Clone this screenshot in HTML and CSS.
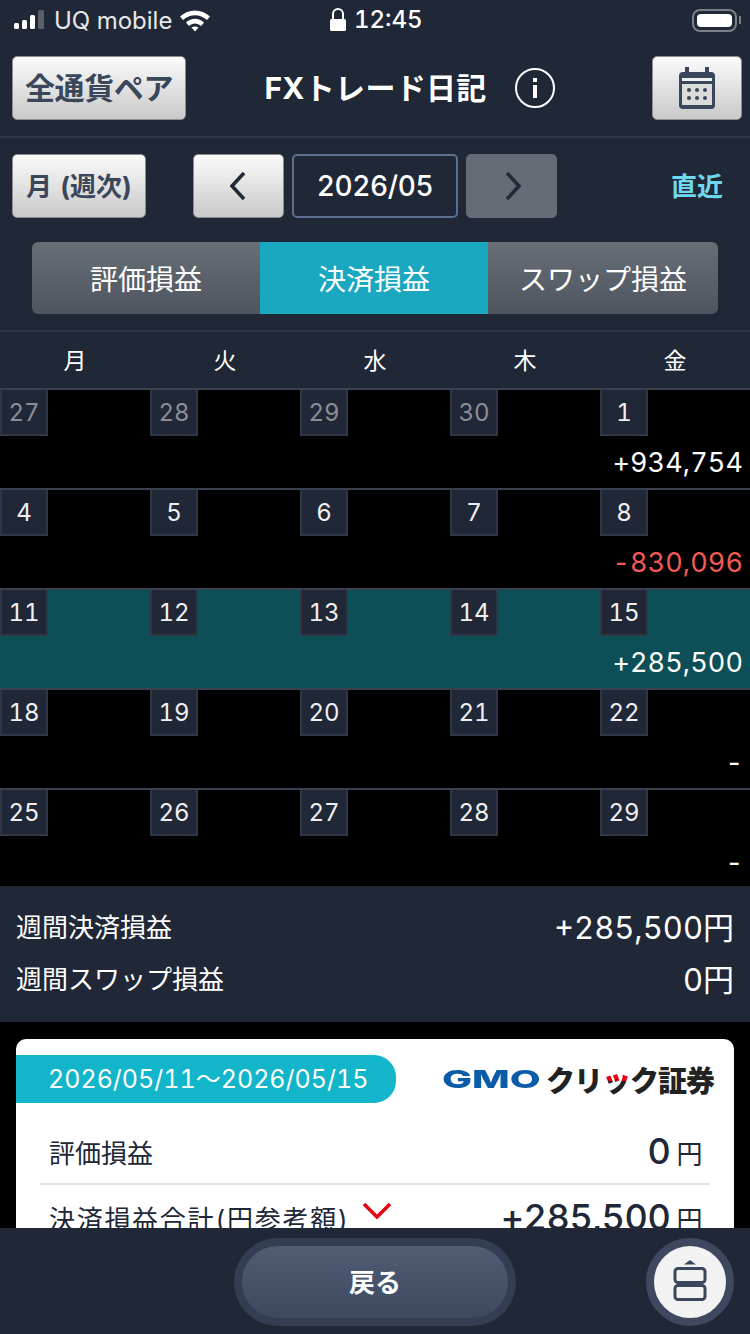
FILE: index.html
```html
<!DOCTYPE html>
<html lang="ja">
<head>
    <meta charset="UTF-8">
    <meta name="viewport" content="width=device-width, initial-scale=1.0">
    <title>FXトレード日記</title>
    <link rel="stylesheet" href="styles.css">
</head>
<body>
<div class="screen">
    <!-- status bar -->
    <div class="status-bar">
        <div class="status-left">
            <svg class="signal" width="34" height="22" viewBox="0 0 34 22">
                <rect x="1" y="14" width="5" height="6" rx="1.5" fill="#fff"/>
                <rect x="9" y="11" width="5" height="9" rx="1.5" fill="#fff"/>
                <rect x="17" y="6" width="5" height="14" rx="1.5" fill="#fff"/>
                <rect x="25" y="1" width="6" height="19" rx="1.5" fill="#5b6068"/>
            </svg>
            <span>UQ mobile</span>
            <svg class="wifi" width="32" height="24" viewBox="0 0 32 24">
                <path d="M1 8.5C9.500 .5 22.500 .5 31 8.500L28 12C21 5.500 11 5.500 4 12Z" fill="#fff"/>
                <path d="M7 14.500C12.500 9.500 19.500 9.500 25 14.500L22 18C18.500 14.500 13.500 14.500 10 18Z" fill="#fff"/>
                <path d="M12.500 19.500C14.500 18 17.500 18 19.500 19.500L16 23.500Z" fill="#fff"/>
            </svg>
        </div>
        <div class="status-center">
            <svg width="18" height="26" viewBox="0 0 18 26">
                <path d="M4 12V7a5 5 0 0 1 10 0v5" fill="none" stroke="#fff" stroke-width="2"/>
                <rect x="1" y="12" width="16" height="12" rx="1.500" fill="#fff"/>
            </svg>
            <span>12:45</span>
        </div>
        <div class="status-right">
            <div class="battery"><div class="battery-level"></div></div>
            <div class="battery-tip"></div>
        </div>
    </div>

    <!-- title -->
    <div class="header">
        <button class="btn btn-pair">全通貨ペア</button>
        <div class="title">
            <span class="title-text">FXトレード日記</span>
            <svg width="40" height="40" viewBox="0 0 40 40">
                <circle cx="20" cy="20" r="19" fill="none" stroke="#fff" stroke-width="2"/>
                <rect x="18" y="10" width="4" height="4" fill="#fff"/>
                <rect x="18" y="17" width="4" height="13" fill="#fff"/>
            </svg>
        </div>
        <button class="btn btn-cal">
            <svg width="36" height="42" viewBox="0 0 36 42">
                <rect x="0" y="5" width="36" height="37" rx="4" fill="#3a465a"/>
                <rect x="6" y="0" width="4" height="8" fill="#3a465a"/>
                <rect x="26" y="0" width="4" height="8" fill="#3a465a"/>
                <rect x="3" y="11" width="30" height="3" fill="#f1f1f1"/>
                <rect x="3" y="17" width="30" height="21" fill="#dcdcdc"/>
                <g fill="#3a465a">
                    <circle cx="10" cy="23" r="2"/><circle cx="18" cy="23" r="2"/><circle cx="26" cy="23" r="2"/>
                    <circle cx="10" cy="31" r="2"/><circle cx="18" cy="31" r="2"/><circle cx="26" cy="31" r="2"/>
                </g>
            </svg>
        </button>
    </div>

    <!-- month nav -->
    <div class="nav-row">
        <button class="btn btn-mode">月 (週次)</button>
        <button class="btn btn-arrow">
            <svg width="18" height="30" viewBox="0 0 18 30"><path d="M14 2L2 15l12 13" fill="none" stroke="#222a38" stroke-width="3.500"/></svg>
        </button>
        <div class="date-box">2026/05</div>
        <button class="btn btn-arrow btn-disabled">
            <svg width="18" height="30" viewBox="0 0 18 30"><path d="M4 2l12 13L4 28" fill="none" stroke="#222a38" stroke-width="3.500"/></svg>
        </button>
        <a class="latest">直近</a>
    </div>

    <div class="tabs">
        <div class="tab">評価損益</div>
        <div class="tab tab-active">決済損益</div>
        <div class="tab">スワップ損益</div>
    </div>

    <!-- calendar -->
    <div class="weekdays">
        <div>月</div><div>火</div><div>水</div><div>木</div><div>金</div>
    </div>
    <div class="week">
        <div class="days">
            <div class="day day-out">27</div><div class="day day-out">28</div><div class="day day-out">29</div><div class="day day-out">30</div><div class="day">1</div>
        </div>
        <div class="week-amount">+934,754</div>
    </div>
    <div class="week">
        <div class="days">
            <div class="day">4</div><div class="day">5</div><div class="day">6</div><div class="day">7</div><div class="day">8</div>
        </div>
        <div class="week-amount minus">-830,096</div>
    </div>
    <div class="week week-selected">
        <div class="days">
            <div class="day">11</div><div class="day">12</div><div class="day">13</div><div class="day">14</div><div class="day">15</div>
        </div>
        <div class="week-amount">+285,500</div>
    </div>
    <div class="week">
        <div class="days">
            <div class="day">18</div><div class="day">19</div><div class="day">20</div><div class="day">21</div><div class="day">22</div>
        </div>
        <div class="week-amount">-</div>
    </div>
    <div class="week week-last">
        <div class="days">
            <div class="day">25</div><div class="day">26</div><div class="day">27</div><div class="day">28</div><div class="day">29</div>
        </div>
        <div class="week-amount">-</div>
    </div>

    <!-- weekly totals -->
    <div class="summary">
        <div class="summary-row"><span>週間決済損益</span><span class="summary-value">+285,500円</span></div>
        <div class="summary-row"><span>週間スワップ損益</span><span class="summary-value">0円</span></div>
    </div>

    <div class="detail">
        <div class="card">
            <div class="card-top">
                <div class="period">2026/05/11～2026/05/15</div>
                <div class="logo"><span class="logo-gmo">GMO</span><span class="logo-name">クリ<span class="logo-tsu">ッ</span>ク証券</span></div>
            </div>
            <div class="card-row">
                <span>評価損益</span>
                <span class="card-value">0<small>円</small></span>
            </div>
            <div class="card-row card-row-last">
                <span class="card-label">決済損益合計(円参考額)
                    <svg width="30" height="18" viewBox="0 0 30 18"><path d="M2 2l13 13L28 2" fill="none" stroke="#e60012" stroke-width="3.500"/></svg>
                </span>
                <span class="card-value">+285,500<small>円</small></span>
            </div>
        </div>
    </div>

    <!-- footer lies over the scrolled content -->
    <div class="footer">
        <div class="back-wrap"><button class="back-btn">戻る</button></div>
        <div class="fab">
            <svg width="34" height="42" viewBox="0 0 34 42">
                <path d="M11 5.500L17 1l6 4.500Z" fill="#3a465a"/>
                <rect x="2" y="9.500" width="30" height="14" rx="3" fill="none" stroke="#3a465a" stroke-width="3"/>
                <rect x="2" y="26.500" width="30" height="14" rx="3" fill="none" stroke="#3a465a" stroke-width="3"/>
            </svg>
        </div>
    </div>
</div>
</body>
</html>
```

FILE: styles.css
```css
* {
    box-sizing: border-box;
}
html, body {
    margin: 0;
    padding: 0;
}
body {
    font-family: Inter, "Noto Sans CJK JP", sans-serif;
    font-variant-numeric: tabular-nums;
    color: #fff;
    background-color: #000;
}
button {
    font-family: inherit;
    padding: 0;
}
.screen {
    position: relative;
    width: 750px;
    height: 1334px;
    overflow: hidden;
    background-color: #000;
}
.status-bar {
    display: flex;
    align-items: center;
    justify-content: space-between;
    height: 40px;
    padding: 0 9px 0 13px;
    background-color: #202736;
    font-size: 24px;
    position: relative;
}
.status-left {
    display: flex;
    align-items: center;
    gap: 7px;
    color: #e8e8e8;
}
.status-center {
    position: absolute;
    left: 329px;
    top: 5px;
    display: flex;
    align-items: center;
    gap: 7px;
    font-size: 24px;
    font-weight: 500;
}
.status-right {
    display: flex;
    align-items: center;
    gap: 2px;
}
.battery {
    width: 45px;
    height: 23px;
    padding: 3px;
    border: 2px solid #7b7f87;
    border-radius: 8px;
}
.battery-level {
    width: 100%;
    height: 100%;
    background-color: #fff;
    border-radius: 4px;
}
.battery-tip {
    width: 2px;
    height: 8px;
    background-color: #7b7f87;
}
.header {
    display: flex;
    align-items: center;
    justify-content: space-between;
    height: 98px;
    padding: 16px 8px 16px 12px;
    background-color: #202736;
    border-bottom: 2px solid #2f3747;
}
.btn {
    height: 64px;
    border: 1px solid #8a8d92;
    border-radius: 5px;
    background: linear-gradient(#fbfbfb, #c9c9c9);
    color: #3a465a;
    font-weight: 700;
    display: flex;
    align-items: center;
    justify-content: center;
}
.btn-pair {
    width: 174px;
    padding-bottom: 4px;
    font-size: 30px;
    letter-spacing: -0.4px;
}
.btn-cal {
    width: 90px;
}
.title {
    display: flex;
    align-items: center;
    gap: 28px;
    font-size: 30px;
    font-weight: 700;
    letter-spacing: 0.3px;
    margin-right: 19px;
}
.title-text {
    padding-bottom: 4px;
}
.nav-row {
    display: flex;
    align-items: center;
    height: 88px;
    padding: 16px 0 8px 12px;
    background-color: #202736;
}
.btn-mode {
    width: 134px;
    padding-bottom: 4px;
    font-size: 26px;
    word-spacing: 2px;
    margin-right: 47px;
}
.btn-arrow {
    width: 91px;
}
.btn-disabled {
    background: #676b75;
    border-color: #676b75;
}
.date-box {
    width: 166px;
    height: 64px;
    margin: 0 8px;
    border: 2px solid #5b6f8e;
    border-radius: 5px;
    font-size: 28px;
    font-weight: 500;
    letter-spacing: -0.4px;
    display: flex;
    align-items: center;
    justify-content: center;
}
.latest {
    margin-left: 114px;
    padding-bottom: 4px;
    color: #6fd8ee;
    font-size: 26px;
    font-weight: 700;
}
.tabs {
    display: flex;
    padding: 16px 32px;
    height: 106px;
    background-color: #202736;
    border-bottom: 2px solid #2f3747;
}
.tab {
    width: 228px;
    display: flex;
    align-items: center;
    justify-content: center;
    font-size: 28px;
    background: linear-gradient(#676e76, #4e555f);
}
.tab:first-child {
    border-radius: 6px 0 0 6px;
}
.tab:last-child {
    width: 230px;
    border-radius: 0 6px 6px 0;
}
.tab-active {
    background: #1aa8c0;
}
.weekdays {
    display: grid;
    grid-template-columns: repeat(5, 150px);
    height: 58px;
    padding-bottom: 3px;
    align-items: center;
    text-align: center;
    font-size: 23px;
    background-color: #202736;
    border-bottom: 2px solid #3a4150;
}
.week {
    height: 100px;
    border-bottom: 2px solid #3a4150;
}
.week-last {
    height: 96px;
    border-bottom: none;
}
.week-selected {
    background-color: #0c4f57;
}
.days {
    display: grid;
    grid-template-columns: repeat(5, 150px);
}
.day {
    width: 48px;
    height: 46px;
    border: 2px solid #2f3747;
    border-top: none;
    background-color: #202736;
    color: #f0f0f0;
    font-size: 24px;
    display: flex;
    align-items: center;
    justify-content: center;
}
.day-out {
    color: #8b8e94;
}
.week-amount {
    margin-top: 10px;
    padding-right: 7px;
    text-align: right;
    font-size: 27px;
    letter-spacing: 0.1px;
}
.minus {
    color: #f25a55;
}
.summary {
    height: 136px;
    padding: 15px 16px 0;
    background-color: #202736;
}
.summary-row {
    display: flex;
    align-items: center;
    justify-content: space-between;
    height: 52px;
    padding-bottom: 4px;
    font-size: 26px;
}
.summary-value {
    font-size: 31px;
}
.detail {
    padding: 17px 16px;
}
.card {
    background-color: #fff;
    border-radius: 10px;
    color: #202736;
    height: 300px;
}
.card-top {
    display: flex;
    align-items: center;
    justify-content: space-between;
    padding: 16px 20px 0 0;
}
.period {
    width: 380px;
    height: 48px;
    padding-left: 32px;
    background-color: #12b5ca;
    border-radius: 0 22px 22px 0;
    color: #fff;
    font-size: 25px;
    line-height: 48px;
    white-space: nowrap;
}
.logo {
    display: flex;
    align-items: center;
    font-weight: 700;
    white-space: nowrap;
}
.logo-gmo {
    color: #0a5ca8;
    font-size: 25px;
    font-weight: 800;
    transform: scaleX(1.6);
    transform-origin: right;
    margin-right: 5px;
}
.logo-name {
    color: #222;
    font-size: 29px;
    font-weight: 900;
    letter-spacing: -1px;
}
.logo-tsu {
    background: linear-gradient(#e60012 50%, #222 50%);
    -webkit-background-clip: text;
    background-clip: text;
    color: transparent;
}
.card-row {
    display: flex;
    align-items: center;
    justify-content: space-between;
    height: 82px;
    margin: 0 24px;
    padding: 16px 8px 0 9px;
    border-bottom: 2px solid #dde2e6;
    font-size: 26px;
}
.card-row-last {
    border-bottom: none;
    height: 64px;
    padding-top: 0;
}
.card-label {
    display: flex;
    align-items: flex-start;
    gap: 12px;
    letter-spacing: 1.7px;
}
.card-label svg {
    margin-top: 3px;
}
.card-value {
    font-size: 36px;
    font-weight: 500;
    letter-spacing: -0.4px;
}
.card-value small {
    font-size: 26px;
    font-weight: 400;
    margin-left: 6px;
}
.footer {
    position: absolute;
    left: 0;
    bottom: 0;
    width: 750px;
    height: 106px;
    background-color: #202736;
}
.back-wrap {
    position: absolute;
    left: 234px;
    top: 10px;
    width: 282px;
    height: 88px;
    padding: 8px;
    border-radius: 44px;
    background-color: #343e52;
}
.back-btn {
    width: 100%;
    height: 100%;
    padding-bottom: 4px;
    border: none;
    border-radius: 36px;
    background: linear-gradient(#505c74, #3d4960);
    color: #fff;
    font-size: 26px;
    font-weight: 700;
}
.fab {
    position: absolute;
    left: 646px;
    top: 10px;
    width: 88px;
    height: 88px;
    padding-bottom: 4px;
    border: 8px solid #3e4960;
    border-radius: 50%;
    background-color: #f2f2f2;
    display: flex;
    align-items: center;
    justify-content: center;
}
```
